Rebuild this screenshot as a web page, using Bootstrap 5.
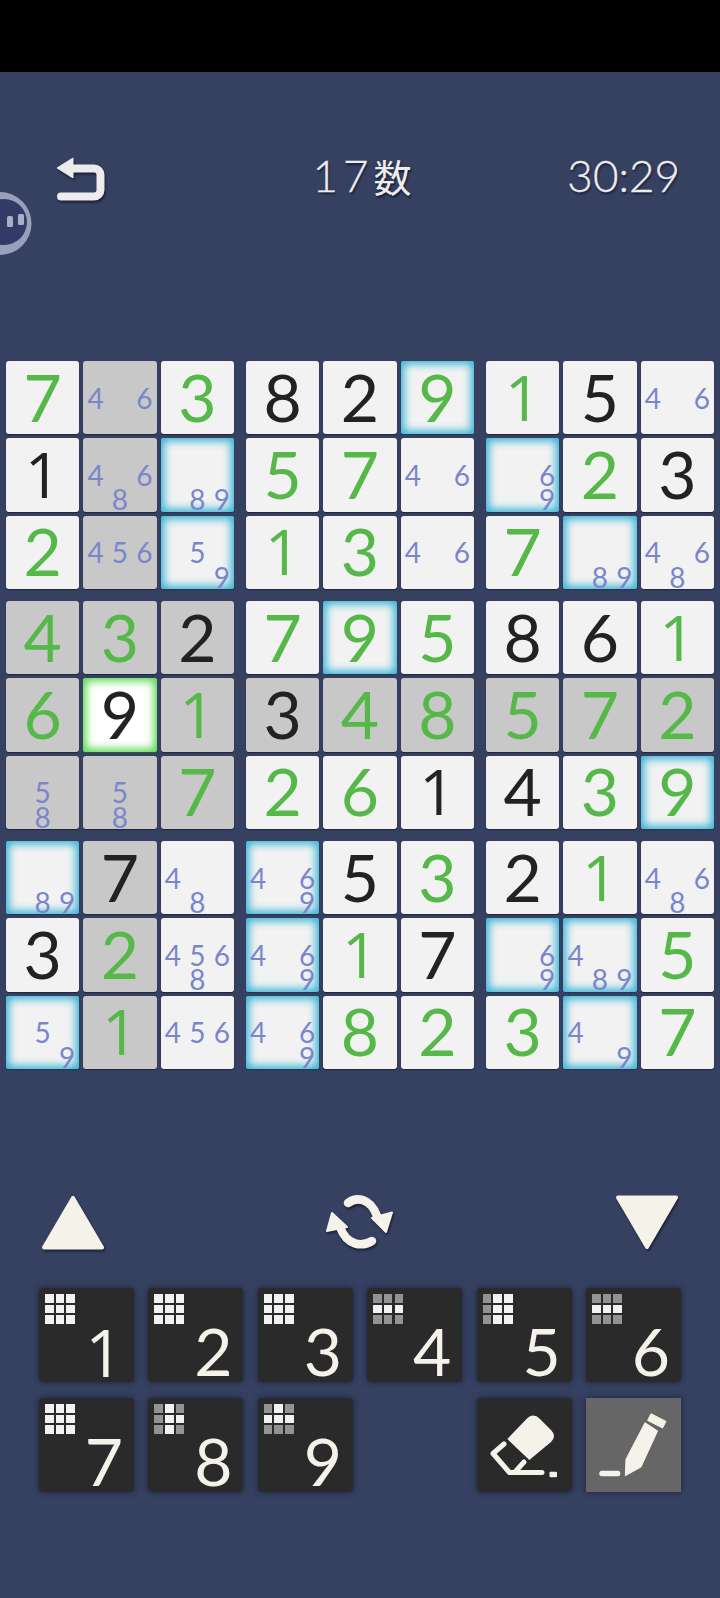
<!DOCTYPE html>
<html lang="ja">
<head>
<meta charset="utf-8">
<title>17数</title>
<link href="https://cdn.jsdelivr.net/npm/bootstrap@5.3.0/dist/css/bootstrap.min.css" rel="stylesheet">
<style>
html,body{margin:0;background:#364060;}
body{width:720px;height:1598px;overflow:hidden;position:relative;font-family:"Lato","Noto Sans CJK JP",sans-serif;}
.topband{height:72px;background:#000;}
.hdr{margin-top:86px;height:44px;padding:0 40px 0 44px;color:#ececec;text-shadow:1px 2px 2px rgba(15,18,35,.75);font-size:44px;line-height:44px;font-weight:300;-webkit-text-stroke:.35px #ececec;}
.hdr-side{flex:1 1 0;}
.hdrtxt{margin-bottom:10px;}
.backico{margin-left:12px;}
.hdr-title{letter-spacing:5px;}
.hdr-title .cjk{font-family:"Noto Sans CJK JP",sans-serif;font-size:38px;letter-spacing:0;font-weight:400;-webkit-text-stroke:0;}
.iconshadow{filter:drop-shadow(1px 2px 1px rgba(15,18,35,.7));}
.bubble{position:absolute;left:0;top:190px;}
.board{margin-top:159px;padding-left:6px;display:grid;grid-template-columns:repeat(3,228px);gap:12px;}
.boxgrid{display:grid;grid-template-columns:repeat(3,73.33px);grid-auto-rows:73.33px;gap:4px;}
.cel{background:#f2f2f2;border-radius:3px;box-shadow:0 1px 1px #22263f;display:flex;align-items:center;justify-content:center;font-size:66px;line-height:66px;font-weight:400;padding-bottom:2px;}
.cel.gy{background:#c8c8c8;}
.cel.bl{box-shadow:0 1px 1px #22384f,inset 0 0 9px 3px #33b2d6;}
.cel.sel{background:#fff;box-shadow:0 1px 1px #2f5b35,inset 0 0 9px 3px #55d84a;}
.cg{color:#55b848;}
.ck{color:#222;}
.uno{font-family:"Open Sans",sans-serif;font-size:63px;}
.cel.nts{display:grid;grid-template-columns:repeat(3,24.44px);grid-template-rows:repeat(3,24.44px);font-size:28px;color:#7a86cc;padding-bottom:0;}
.cel.nts span{display:flex;align-items:center;justify-content:center;line-height:24px;}
.n4{grid-area:2/1;}.n5{grid-area:2/2;}.n6{grid-area:2/3;}
.n7{grid-area:3/1;}.n8{grid-area:3/2;}.n9{grid-area:3/3;}
.arrows{margin-top:126px;height:62px;padding:0 42px;}
.refresh{margin-top:-15px;}
.pad{margin-top:31px;margin-left:39px;display:grid;grid-template-columns:repeat(6,95px);grid-auto-rows:94px;column-gap:14.4px;row-gap:16px;}
.key{background:#2a2a2a;border-radius:4px;border:0;padding:0;box-shadow:0 0 6px rgba(18,22,48,.7);color:#f5f2e9;display:flex;flex-direction:column;}
.key:hover,.key:active{background:#2a2a2a;color:#f5f2e9;}
.key.on,.key.on:hover{background:#666;border-radius:0;}
.mini{display:grid;grid-template-columns:repeat(3,8.6px);grid-auto-rows:8.6px;gap:2.1px;margin:6px 0 0 6px;}
.mini i{background:#f2f2f2;display:block;}
.mini i.d{background:#939393;}
.keynum{margin:2px 0 0 34px;width:62px;text-align:center;font-size:66px;line-height:50px;font-weight:400;}
.emptykey{visibility:hidden;}
.fill{fill:#f5f2e9;}
</style>
</head>
<body>
<div class="topband"></div>
<div class="hdr d-flex align-items-center">
  <div class="hdr-side">
    <svg class="iconshadow d-block backico" width="50" height="46" viewBox="0 0 50 46"><polygon points="1,11 17,1 17,21" fill="#ececec" stroke="#ececec" stroke-width="1" stroke-linejoin="round"/><path d="M15 11.5H38a6.5 6.5 0 0 1 6.5 6.5v15a6.5 6.5 0 0 1-6.5 6.5H5" fill="none" stroke="#ececec" stroke-width="8" stroke-linecap="round"/></svg>
  </div>
  <div class="hdr-title hdrtxt">17<span class="cjk">数</span></div>
  <div class="hdr-side text-end hdrtxt">30:29</div>
</div>
<svg class="bubble" width="34" height="68" viewBox="0 0 34 68"><circle cx="0" cy="33.500" r="31.500" fill="#9aa0ba"/><circle cx="4" cy="32" r="23" fill="#323c66"/><rect x="7" y="26" width="6" height="11" rx="1.500" fill="#a9afc6"/><rect x="18" y="24" width="6" height="11" rx="1.500" fill="#a9afc6"/></svg>

<div class="board">
  <div class="boxgrid">
    <div class="cel cg">7</div>
    <div class="cel gy nts"><span class="n4">4</span><span class="n6">6</span></div>
    <div class="cel cg">3</div>
    <div class="cel ck uno">1</div>
    <div class="cel gy nts"><span class="n4">4</span><span class="n6">6</span><span class="n8">8</span></div>
    <div class="cel bl nts"><span class="n8">8</span><span class="n9">9</span></div>
    <div class="cel cg">2</div>
    <div class="cel gy nts"><span class="n4">4</span><span class="n5">5</span><span class="n6">6</span></div>
    <div class="cel bl nts"><span class="n5">5</span><span class="n9">9</span></div>
  </div>
  <div class="boxgrid">
    <div class="cel ck">8</div>
    <div class="cel ck">2</div>
    <div class="cel bl cg">9</div>
    <div class="cel cg">5</div>
    <div class="cel cg">7</div>
    <div class="cel nts"><span class="n4">4</span><span class="n6">6</span></div>
    <div class="cel cg uno">1</div>
    <div class="cel cg">3</div>
    <div class="cel nts"><span class="n4">4</span><span class="n6">6</span></div>
  </div>
  <div class="boxgrid">
    <div class="cel cg uno">1</div>
    <div class="cel ck">5</div>
    <div class="cel nts"><span class="n4">4</span><span class="n6">6</span></div>
    <div class="cel bl nts"><span class="n6">6</span><span class="n9">9</span></div>
    <div class="cel cg">2</div>
    <div class="cel ck">3</div>
    <div class="cel cg">7</div>
    <div class="cel bl nts"><span class="n8">8</span><span class="n9">9</span></div>
    <div class="cel nts"><span class="n4">4</span><span class="n6">6</span><span class="n8">8</span></div>
  </div>
  <div class="boxgrid">
    <div class="cel gy cg">4</div>
    <div class="cel gy cg">3</div>
    <div class="cel gy ck">2</div>
    <div class="cel gy cg">6</div>
    <div class="cel sel ck">9</div>
    <div class="cel gy cg uno">1</div>
    <div class="cel gy nts"><span class="n5">5</span><span class="n8">8</span></div>
    <div class="cel gy nts"><span class="n5">5</span><span class="n8">8</span></div>
    <div class="cel gy cg">7</div>
  </div>
  <div class="boxgrid">
    <div class="cel cg">7</div>
    <div class="cel bl cg">9</div>
    <div class="cel cg">5</div>
    <div class="cel gy ck">3</div>
    <div class="cel gy cg">4</div>
    <div class="cel gy cg">8</div>
    <div class="cel cg">2</div>
    <div class="cel cg">6</div>
    <div class="cel ck uno">1</div>
  </div>
  <div class="boxgrid">
    <div class="cel ck">8</div>
    <div class="cel ck">6</div>
    <div class="cel cg uno">1</div>
    <div class="cel gy cg">5</div>
    <div class="cel gy cg">7</div>
    <div class="cel gy cg">2</div>
    <div class="cel ck">4</div>
    <div class="cel cg">3</div>
    <div class="cel bl cg">9</div>
  </div>
  <div class="boxgrid">
    <div class="cel bl nts"><span class="n8">8</span><span class="n9">9</span></div>
    <div class="cel gy ck">7</div>
    <div class="cel nts"><span class="n4">4</span><span class="n8">8</span></div>
    <div class="cel ck">3</div>
    <div class="cel gy cg">2</div>
    <div class="cel nts"><span class="n4">4</span><span class="n5">5</span><span class="n6">6</span><span class="n8">8</span></div>
    <div class="cel bl nts"><span class="n5">5</span><span class="n9">9</span></div>
    <div class="cel gy cg uno">1</div>
    <div class="cel nts"><span class="n4">4</span><span class="n5">5</span><span class="n6">6</span></div>
  </div>
  <div class="boxgrid">
    <div class="cel bl nts"><span class="n4">4</span><span class="n6">6</span><span class="n9">9</span></div>
    <div class="cel ck">5</div>
    <div class="cel cg">3</div>
    <div class="cel bl nts"><span class="n4">4</span><span class="n6">6</span><span class="n9">9</span></div>
    <div class="cel cg uno">1</div>
    <div class="cel ck">7</div>
    <div class="cel bl nts"><span class="n4">4</span><span class="n6">6</span><span class="n9">9</span></div>
    <div class="cel cg">8</div>
    <div class="cel cg">2</div>
  </div>
  <div class="boxgrid">
    <div class="cel ck">2</div>
    <div class="cel cg uno">1</div>
    <div class="cel nts"><span class="n4">4</span><span class="n6">6</span><span class="n8">8</span></div>
    <div class="cel bl nts"><span class="n6">6</span><span class="n9">9</span></div>
    <div class="cel bl nts"><span class="n4">4</span><span class="n8">8</span><span class="n9">9</span></div>
    <div class="cel cg">5</div>
    <div class="cel cg">3</div>
    <div class="cel bl nts"><span class="n4">4</span><span class="n9">9</span></div>
    <div class="cel cg">7</div>
  </div>
</div>

<div class="arrows d-flex justify-content-between align-items-start">
  <svg class="iconshadow d-block" width="62" height="55" viewBox="0 0 62 55"><polygon points="31,3 60,52.500 2,52.500" class="fill" stroke="#f5f2e9" stroke-width="4" stroke-linejoin="round"/></svg>
  <svg class="iconshadow d-block refresh" width="100" height="85" viewBox="0 0 100 85"><path d="M38 23C46 17 60 17 67 36M62 61C52 67 37 66 30 47" fill="none" stroke="#f5f2e9" stroke-width="8.500" stroke-linecap="round"/><polygon points="62,38 82,32.500 76,52" class="fill" stroke="#f5f2e9" stroke-width="2" stroke-linejoin="round"/><polygon points="22,33 37,47 17,51" class="fill" stroke="#f5f2e9" stroke-width="2" stroke-linejoin="round"/></svg>
  <svg class="iconshadow d-block" width="62" height="55" viewBox="0 0 62 55"><polygon points="31,52 60,2.500 2,2.500" class="fill" stroke="#f5f2e9" stroke-width="4" stroke-linejoin="round"/></svg>
</div>

<div class="pad">
  <button class="btn key"><span class="mini"><i></i><i></i><i></i><i></i><i></i><i></i><i></i><i></i><i></i></span><span class="keynum uno">1</span></button>
  <button class="btn key"><span class="mini"><i></i><i></i><i></i><i></i><i></i><i></i><i></i><i></i><i></i></span><span class="keynum">2</span></button>
  <button class="btn key"><span class="mini"><i></i><i></i><i></i><i></i><i></i><i></i><i></i><i></i><i></i></span><span class="keynum">3</span></button>
  <button class="btn key"><span class="mini"><i class="d"></i><i class="d"></i><i class="d"></i><i></i><i></i><i></i><i class="d"></i><i class="d"></i><i class="d"></i></span><span class="keynum">4</span></button>
  <button class="btn key"><span class="mini"><i class="d"></i><i></i><i></i><i class="d"></i><i></i><i></i><i class="d"></i><i></i><i></i></span><span class="keynum">5</span></button>
  <button class="btn key"><span class="mini"><i class="d"></i><i class="d"></i><i class="d"></i><i></i><i></i><i></i><i class="d"></i><i class="d"></i><i class="d"></i></span><span class="keynum">6</span></button>
  <button class="btn key"><span class="mini"><i></i><i></i><i></i><i></i><i></i><i></i><i></i><i></i><i></i></span><span class="keynum">7</span></button>
  <button class="btn key"><span class="mini"><i class="d"></i><i></i><i class="d"></i><i class="d"></i><i></i><i></i><i class="d"></i><i></i><i class="d"></i></span><span class="keynum">8</span></button>
  <button class="btn key"><span class="mini"><i class="d"></i><i></i><i class="d"></i><i></i><i></i><i></i><i class="d"></i><i class="d"></i><i class="d"></i></span><span class="keynum">9</span></button>
  <div class="emptykey"></div>
  <button class="btn key"><svg class="d-block" width="95" height="94" viewBox="7 8 95 94"><path d="M37.300 49L56 29.500Q63 22 70 29L81 40Q87 46 81 52L59.300 70Z" class="fill"/><path d="M34 54L23 63.500L39.500 82.500H72M54 72L45 82" fill="none" stroke="#f5f2e9" stroke-width="5" stroke-linecap="round" stroke-linejoin="round"/><rect x="79.500" y="81.700" width="7.500" height="5.500" rx="1" class="fill"/></svg></button>
  <button class="btn key on"><svg class="d-block" width="94" height="94" viewBox="116.700 8.300 94 94"><polygon points="156,86 156.700,69.500 175.700,33 188.300,41.200 171.700,77.300" class="fill" stroke="#f5f2e9" stroke-width="1" stroke-linejoin="round"/><polygon points="181.700,24 196.700,31.700 193.300,38.300 178.300,30.700" class="fill" stroke="#f5f2e9" stroke-width="1" stroke-linejoin="round"/><rect x="130" y="81" width="21" height="5.500" rx="2.500" class="fill"/></svg></button>
</div>
<script src="https://cdn.jsdelivr.net/npm/bootstrap@5.3.0/dist/js/bootstrap.bundle.min.js"></script>
</body>
</html>
